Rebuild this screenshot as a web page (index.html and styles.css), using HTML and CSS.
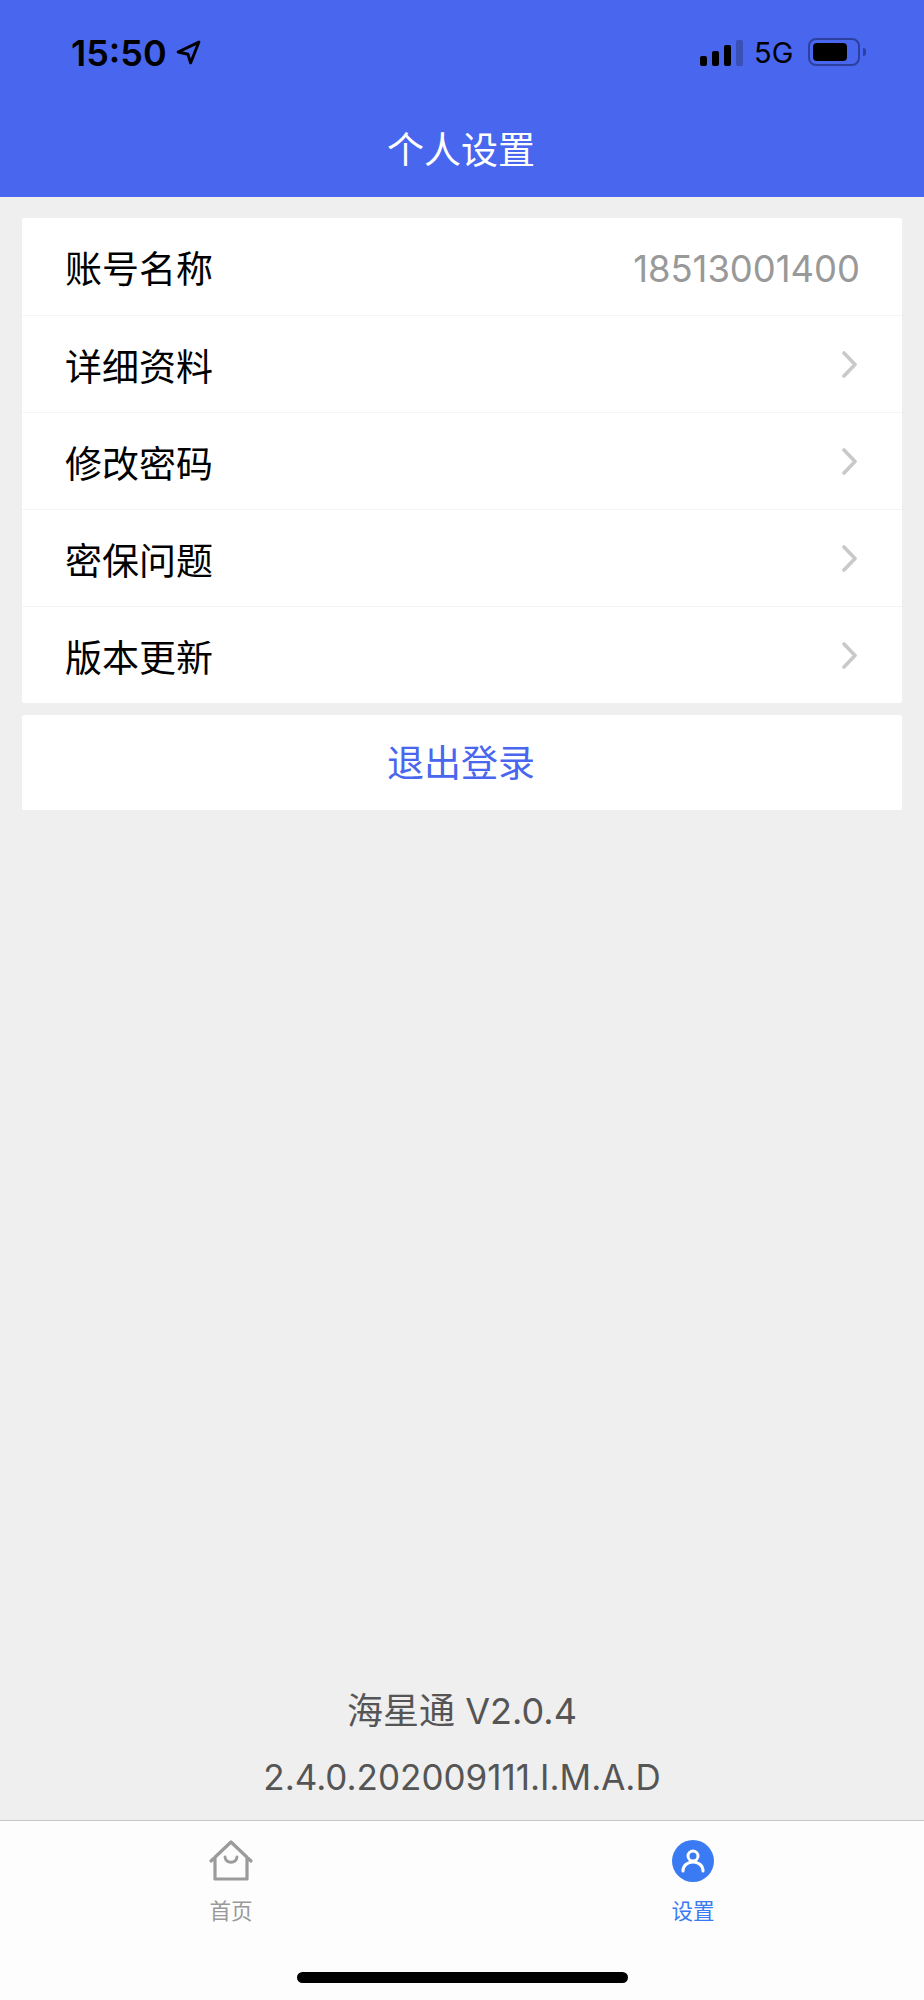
FILE: index.html
```html
<!DOCTYPE html>
<html lang="zh-CN">
<head>
<meta charset="utf-8">
<title>个人设置</title>
<link rel="stylesheet" href="styles.css">
</head>
<body>
<div class="app">
  <header class="header">
    <div class="status">
      <div class="status-left">
        <span class="time">15:50</span>
        <svg class="arrow" viewBox="0 0 24 24" width="25" height="25"><path d="M22 2 2 11.5l9.5 2.2L14 22z" fill="none" stroke="#000" stroke-width="2.8" stroke-linejoin="round"/></svg>
      </div>
      <div class="status-right">
        <div class="signal"><i class="b1"></i><i class="b2"></i><i class="b3"></i><i class="b4"></i></div>
        <span class="net">5G</span>
        <div class="battery"><div class="battery-body"><div class="battery-fill"></div></div><div class="battery-nub"></div></div>
      </div>
    </div>
    <h1 class="title">个人设置</h1>
  </header>
  <main class="main">
    <section class="card">
      <div class="row"><span class="label">账号名称</span><span class="value">18513001400</span></div>
      <div class="row"><span class="label">详细资料</span><svg class="chev" viewBox="0 0 16 27" width="16" height="27"><path d="M2 2l11 11.500L2 25" fill="none" stroke="#c9c9c9" stroke-width="3.600" stroke-linecap="round" stroke-linejoin="round"/></svg></div>
      <div class="row"><span class="label">修改密码</span><svg class="chev" viewBox="0 0 16 27" width="16" height="27"><path d="M2 2l11 11.500L2 25" fill="none" stroke="#c9c9c9" stroke-width="3.600" stroke-linecap="round" stroke-linejoin="round"/></svg></div>
      <div class="row"><span class="label">密保问题</span><svg class="chev" viewBox="0 0 16 27" width="16" height="27"><path d="M2 2l11 11.500L2 25" fill="none" stroke="#c9c9c9" stroke-width="3.600" stroke-linecap="round" stroke-linejoin="round"/></svg></div>
      <div class="row"><span class="label">版本更新</span><svg class="chev" viewBox="0 0 16 27" width="16" height="27"><path d="M2 2l11 11.500L2 25" fill="none" stroke="#c9c9c9" stroke-width="3.600" stroke-linecap="round" stroke-linejoin="round"/></svg></div>
    </section>
    <section class="card logout">退出登录</section>
    <div class="about">
      <p class="about-name">海星通 V2.0.4</p>
      <p>2.4.0.202009111.I.M.A.D</p>
    </div>
  </main>
  <nav class="tabs">
    <div class="tab">
      <svg class="tab-icon" viewBox="0 0 44 42" width="44" height="42"><path d="M2 21 22 2l20 19M6 17v22h32V17" fill="none" stroke="#9b9b9b" stroke-width="3.2" stroke-linecap="round" stroke-linejoin="round"/><path d="M16 17c1 7 11 7 12 0" fill="none" stroke="#9b9b9b" stroke-width="2.8" stroke-linecap="round"/></svg>
      <span class="tab-label">首页</span>
    </div>
    <div class="tab active">
      <svg class="tab-icon" viewBox="0 0 42 42" width="42" height="42"><circle cx="21" cy="21" r="21" fill="#3a7bf3"/><circle cx="21" cy="16" r="5" fill="none" stroke="#fff" stroke-width="3"/><path d="M11 31c0-12 20-12 20 0" fill="none" stroke="#fff" stroke-width="3" stroke-linecap="round"/></svg>
      <span class="tab-label">设置</span>
    </div>
    <div class="home-indicator"></div>
  </nav>
</div>
</body>
</html>
```
FILE: styles.css
```css
* { box-sizing: border-box; }
html, body { margin: 0; padding: 0; }
body {
  font-family: Inter, "Noto Sans CJK SC", sans-serif;
  background: #efefef;
  color: #000;
}
.app { width: 924px; height: 2000px; display: flex; flex-direction: column; }

.header { height: 197px; background: #4866ee; display: flex; flex-direction: column; }
.status {
  height: 107px;
  padding: 35px 58px 0 71px;
  display: flex;
  justify-content: space-between;
  align-items: flex-start;
}
.status-left { display: flex; align-items: center; gap: 9px; height: 36px; }
.time { font-size: 36px; line-height: 36px; font-weight: 600; }
.arrow { margin-top: -2px; }
.status-right { display: flex; align-items: flex-end; height: 31px; }
.signal { display: flex; align-items: flex-end; gap: 5px; height: 27px; }
.signal i { display: block; width: 7px; background: #000; border-radius: 2px; }
.signal .b1 { height: 10px; }
.signal .b2 { height: 15px; }
.signal .b3 { height: 21px; }
.signal .b4 { height: 26px; background: #3a50b5; }
.net { font-size: 29px; line-height: 32px; margin-left: 11px; margin-bottom: -3px; width: 54px; }
.battery { display: flex; align-items: center; height: 28px; }
.battery-body { width: 52px; height: 28px; border: 2px solid #2c419f; border-radius: 8px; padding: 3px; }
.battery-fill { width: 34px; height: 18px; background: #000; border-radius: 4px; }
.battery-nub { width: 3px; height: 8px; margin-left: 3px; background: #2c419f; border-radius: 0 4px 4px 0; }
.title { margin: 0; padding-right: 2px; text-align: center; color: #fff; font-size: 37px; line-height: 88px; font-weight: 400; }

.main { flex: 1; display: flex; flex-direction: column; padding: 21px 22px 10px; }
.card { background: #fff; border-radius: 2px; }
.row {
  height: 97px;
  padding: 0 44px 0 43px;
  display: flex;
  justify-content: space-between;
  align-items: center;
  font-size: 37px;
  border-bottom: 1px solid #f4f4f4;
}
.row:first-child { height: 98px; }
.row:last-child { border-bottom: 0; height: 96px; }
.label { padding-top: 1px; }
.value { color: #999; font-size: 36.400px; padding-top: 5px; margin-right: -2px; }
.logout {
  margin-top: 12px;
  height: 95px;
  padding: 0 2px 3px 0;
  display: flex;
  align-items: center;
  justify-content: center;
  color: #4866ee;
  font-size: 37px;
}
.about { margin-top: auto; text-align: center; color: #555; font-size: 35px; line-height: 66px; }
.about p { margin: 0; }
.about-name { font-size: 36px; }

.tabs {
  position: relative;
  height: 180px;
  background: #fdfdfd;
  border-top: 1px solid #c8c8c8;
  display: flex;
  align-items: flex-start;
}
.tab { flex: 1; display: flex; flex-direction: column; align-items: center; padding-top: 19px; color: #999; }
.tab.active { color: #3a7bf3; }
.tab-icon { display: block; }
.tab-label { font-size: 21.500px; line-height: 30px; margin-top: 14px; }
.home-indicator {
  position: absolute;
  left: 297px;
  bottom: 17px;
  width: 331px;
  height: 11px;
  background: #000;
  border-radius: 6px;
}
```
